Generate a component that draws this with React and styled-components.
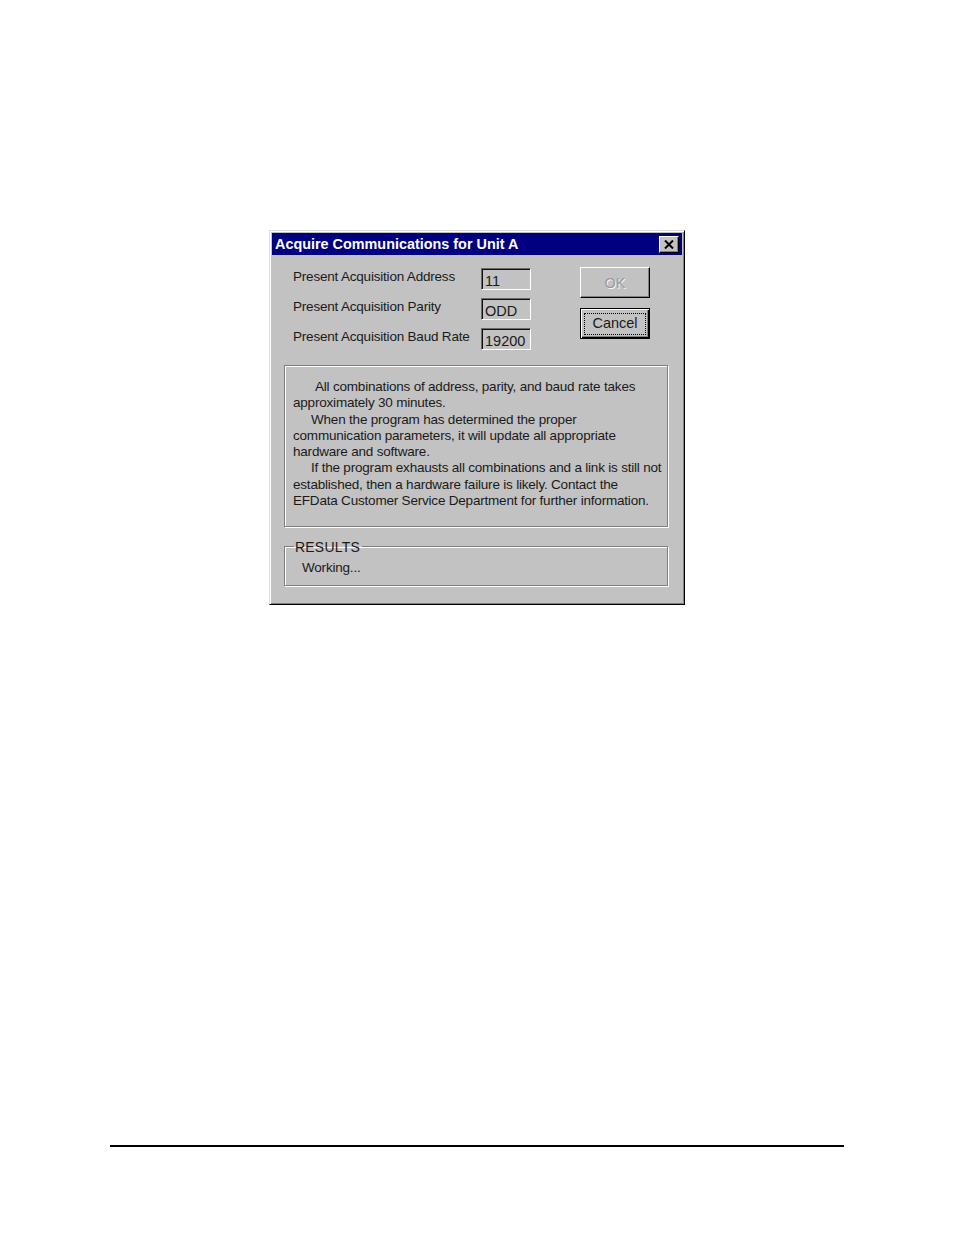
import React from "react";
import styled, { createGlobalStyle } from "styled-components";

const Global = createGlobalStyle`
  html, body { margin: 0; padding: 0; background: #fff; }
  body { font-family: "Liberation Sans", Arial, sans-serif; }
`;

const Page = styled.div`
  width: 954px;
  height: 1235px;
  position: relative;
  background: #fff;
  padding-top: 230px;
  box-sizing: border-box;
`;

const Dialog = styled.div`
  margin-left: 269px;
  width: 416px;
  height: 375px;
  box-sizing: border-box;
  background: #c2c2c2;
  border-top: 1px solid #dcdcdc;
  border-left: 1px solid #dcdcdc;
  border-right: 1px solid #000;
  border-bottom: 1px solid #000;
  box-shadow: inset 1px 1px 0 #fff, inset -1px -1px 0 #808080;
  padding: 2px;
  display: flex;
  flex-direction: column;
  color: #1a1a1a;
  font-size: 13.5px;
  letter-spacing: -0.2px;
`;

const TitleBar = styled.div`
  height: 22px;
  background: #000080;
  display: flex;
  align-items: center;
  justify-content: space-between;
  padding: 0 3px 0 3px;
  color: #fff;
  font-weight: bold;
  font-size: 14.4px;
  letter-spacing: 0;
`;

const CloseBtn = styled.div`
  width: 20px;
  height: 17px;
  box-sizing: border-box;
  background: #c2c2c2;
  border-top: 1px solid #fff;
  border-left: 1px solid #fff;
  border-right: 1px solid #000;
  border-bottom: 1px solid #000;
  box-shadow: inset -1px -1px 0 #808080;
  display: flex;
  align-items: center;
  justify-content: center;
`;

const Content = styled.div`
  padding: 13px 14px 0 12px;
  display: flex;
  flex-direction: column;
`;

const TopRow = styled.div`
  display: flex;
  padding-left: 9px;
  height: 84px;
`;

const Fields = styled.div`
  display: grid;
  grid-template-columns: 188px 50px;
  row-gap: 8px;
  align-items: center;
  align-content: start;
`;

const Label = styled.div`
  line-height: 22px;
  height: 22px;
  margin-top: -4px;
  white-space: nowrap;
`;

const Field = styled.div`
  height: 22px;
  box-sizing: border-box;
  border-top: 1px solid #6a6a6a;
  border-left: 1px solid #6a6a6a;
  border-right: 1px solid #fff;
  border-bottom: 1px solid #fff;
  box-shadow: inset 1px 1px 0 #101010;
  padding: 3px 0 0 3px;
  font-size: 14.5px;
  line-height: 18px;
  letter-spacing: 0;
`;

const Buttons = styled.div`
  margin-left: 49px;
  margin-top: -1px;
  display: flex;
  flex-direction: column;
  gap: 10px;
`;

const Button = styled.div`
  width: 70px;
  height: 31px;
  box-sizing: border-box;
  display: flex;
  align-items: center;
  justify-content: center;
  font-size: 14.5px;
  letter-spacing: 0;
  color: ${(p) => (p.disabled ? "#9a9a9a" : "#1a1a1a")};
  text-shadow: ${(p) => (p.disabled ? "1px 1px 0 #f4f4f4" : "none")};
  border-top: 1px solid ${(p) => (p.isDefault ? "#000" : "#fff")};
  border-left: 1px solid ${(p) => (p.isDefault ? "#000" : "#fff")};
  border-right: 1px solid #000;
  border-bottom: 1px solid #000;
  box-shadow: ${(p) =>
    p.isDefault
      ? "inset 1px 1px 0 #fff, inset -1px -1px 0 #000, inset -2px -2px 0 #808080"
      : "inset -1px -1px 0 #808080"};
`;

const Focus = styled.span`
  border: 1px dotted #000;
  padding: 1px 7px 2px 7px;
  line-height: 17px;
`;

const MessageBox = styled.div`
  margin-top: 13px;
  height: 162px;
  box-sizing: border-box;
  border: 1px solid #808080;
  box-shadow: 1px 1px 0 #fff, inset 1px 1px 0 #fff;
  padding: 13px 3px 0 8px;
  font-size: 13.5px;
  line-height: 16.3px;
  letter-spacing: -0.2px;
`;

const Para = styled.p`
  margin: 0;
  text-indent: ${(p) => p.indent}px;
`;

const Group = styled.fieldset`
  margin: 11px 0 0 0;
  height: 48px;
  box-sizing: border-box;
  border: 1px solid #808080;
  box-shadow: 1px 1px 0 #fff, inset 1px 1px 0 #fff;
  padding: 0 0 0 17px;
`;

const Legend = styled.legend`
  padding: 0 2px 0 1px;
  margin-left: -8px;
  font-size: 14px;
  letter-spacing: 0.2px;
  position: relative;
  top: 1px;
`;

const GroupText = styled.div`
  margin-top: 6px;
`;

const Rule = styled.div`
  position: absolute;
  left: 110px;
  top: 1145px;
  width: 734px;
  height: 1.5px;
  background: #000;
`;

export default function App() {
  return (
    <>
      <Global />
      <Page>
        <Dialog>
          <TitleBar>
            <span>Acquire Communications for Unit A</span>
            <CloseBtn>
              <svg width="10" height="9" viewBox="0 0 10 9">
                <path d="M1 0.5 L9 8.5 M9 0.5 L1 8.5" stroke="#000" strokeWidth="2" />
              </svg>
            </CloseBtn>
          </TitleBar>
          <Content>
            <TopRow>
              <Fields>
                <Label>Present Acquisition Address</Label>
                <Field>11</Field>
                <Label>Present Acquisition Parity</Label>
                <Field>ODD</Field>
                <Label>Present Acquisition Baud Rate</Label>
                <Field>19200</Field>
              </Fields>
              <Buttons>
                <Button disabled>OK</Button>
                <Button isDefault>
                  <Focus>Cancel</Focus>
                </Button>
              </Buttons>
            </TopRow>
            <MessageBox>
              <Para indent={22}>
                All combinations of address, parity, and baud rate takes approximately 30 minutes.
              </Para>
              <Para indent={18}>
                When the program has determined the proper communication parameters, it will update all appropriate hardware and software.
              </Para>
              <Para indent={18}>
                If the program exhausts all combinations and a link is still not established, then a hardware failure is likely. Contact the EFData Customer Service Department for further information.
              </Para>
            </MessageBox>
            <Group>
              <Legend>RESULTS</Legend>
              <GroupText>Working...</GroupText>
            </Group>
          </Content>
        </Dialog>
        <Rule />
      </Page>
    </>
  );
}
